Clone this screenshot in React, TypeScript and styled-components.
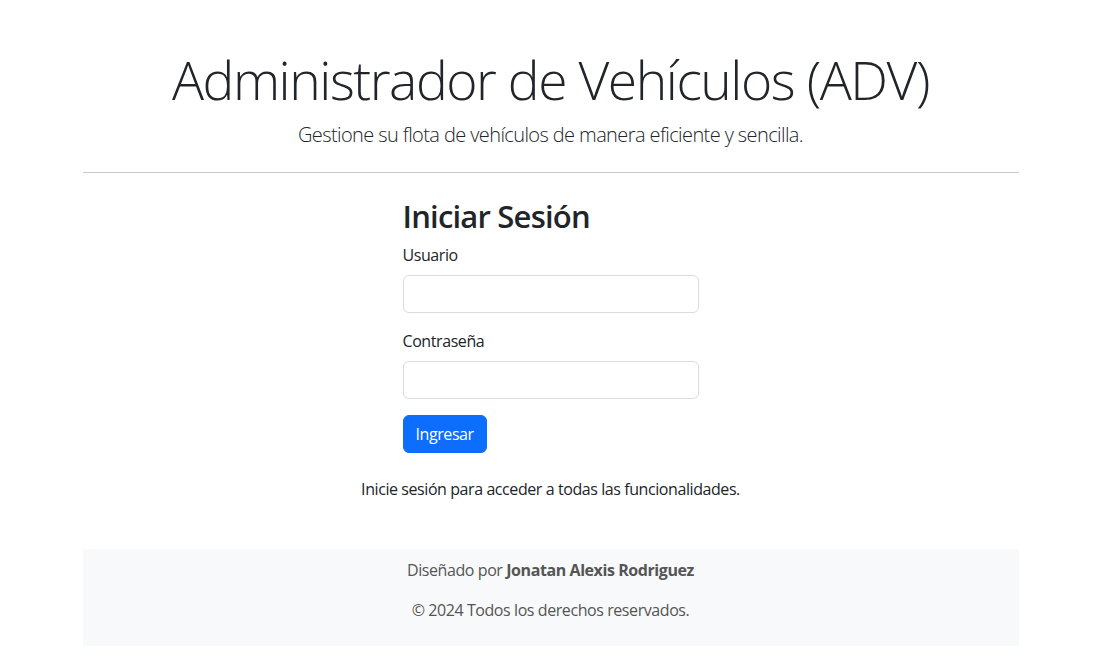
import styled, { createGlobalStyle } from 'styled-components';

const GlobalStyle = createGlobalStyle`
  *, *::before, *::after {
    box-sizing: border-box;
  }

  body {
    margin: 0;
    background: #fff;
    color: #212529;
    font-family: 'Open Sans', 'Noto Sans', sans-serif;
    font-size: 16px;
    line-height: 1.5;
    letter-spacing: -0.42px;
  }
`;

const Container = styled.div`
  width: 960px;
  margin: 0 auto;
  padding: 0 13px 0 11px;
`;

const Header = styled.header`
  padding-top: 48px;
  text-align: center;
`;

const Title = styled.h1`
  margin: 0 0 8px;
  font-size: 53.4px;
  font-weight: 300;
  line-height: 1.2;
  letter-spacing: -1.45px;
`;

const Lead = styled.p`
  margin: 0;
  font-size: 20px;
  font-weight: 300;
  line-height: 1.5;
  letter-spacing: -0.6px;
`;

const Divider = styled.hr`
  margin: 22px 0 25px;
  border: 0;
  border-top: 1px solid #c8c9ca;
`;

const FormColumn = styled.main`
  width: 296px;
  margin-left: 320px;
`;

const FormTitle = styled.h2`
  margin: 0 0 8px;
  font-size: 31px;
  font-weight: 600;
  line-height: 1.2;
  letter-spacing: -0.8px;
`;

const Field = styled.div`
  margin-bottom: 16px;
`;

const Label = styled.label`
  display: block;
  margin-bottom: 8px;
`;

const Input = styled.input`
  display: block;
  width: 100%;
  height: 38px;
  padding: 6px 12px;
  border: 1px solid #d9dcdf;
  border-radius: 6px;
  font: inherit;
`;

const Button = styled.button`
  height: 38px;
  padding: 0 12px;
  border: 1px solid #0d6efd;
  border-radius: 6px;
  background: #0d6efd;
  color: #fff;
  font: inherit;
  letter-spacing: -0.42px;
`;

const Note = styled.p`
  margin: 24px 0 0;
  text-align: center;
`;

const Footer = styled.footer`
  margin-top: 48px;
  padding: 9px 0 8px;
  background: #f8f9fa;
  color: #555;
  text-align: center;

  p {
    margin: 0 0 16px;
  }

  strong {
    font-weight: 700;
  }
`;

export default function App() {
  return (
    <>
      <GlobalStyle />
      <Container>
        <Header>
          <Title>Administrador de Vehículos (ADV)</Title>
          <Lead>Gestione su flota de vehículos de manera eficiente y sencilla.</Lead>
        </Header>

        <Divider />

        <FormColumn>
          <FormTitle>Iniciar Sesión</FormTitle>
          <Field>
            <Label htmlFor="usuario">Usuario</Label>
            <Input id="usuario" type="text" />
          </Field>
          <Field>
            <Label htmlFor="password">Contraseña</Label>
            <Input id="password" type="password" />
          </Field>
          <Button type="submit">Ingresar</Button>
        </FormColumn>

        <Note>Inicie sesión para acceder a todas las funcionalidades.</Note>

        <Footer>
          <p>
            Diseñado por <strong>Jonatan Alexis Rodriguez</strong>
          </p>
          <p>© 2024 Todos los derechos reservados.</p>
        </Footer>
      </Container>
    </>
  );
}
